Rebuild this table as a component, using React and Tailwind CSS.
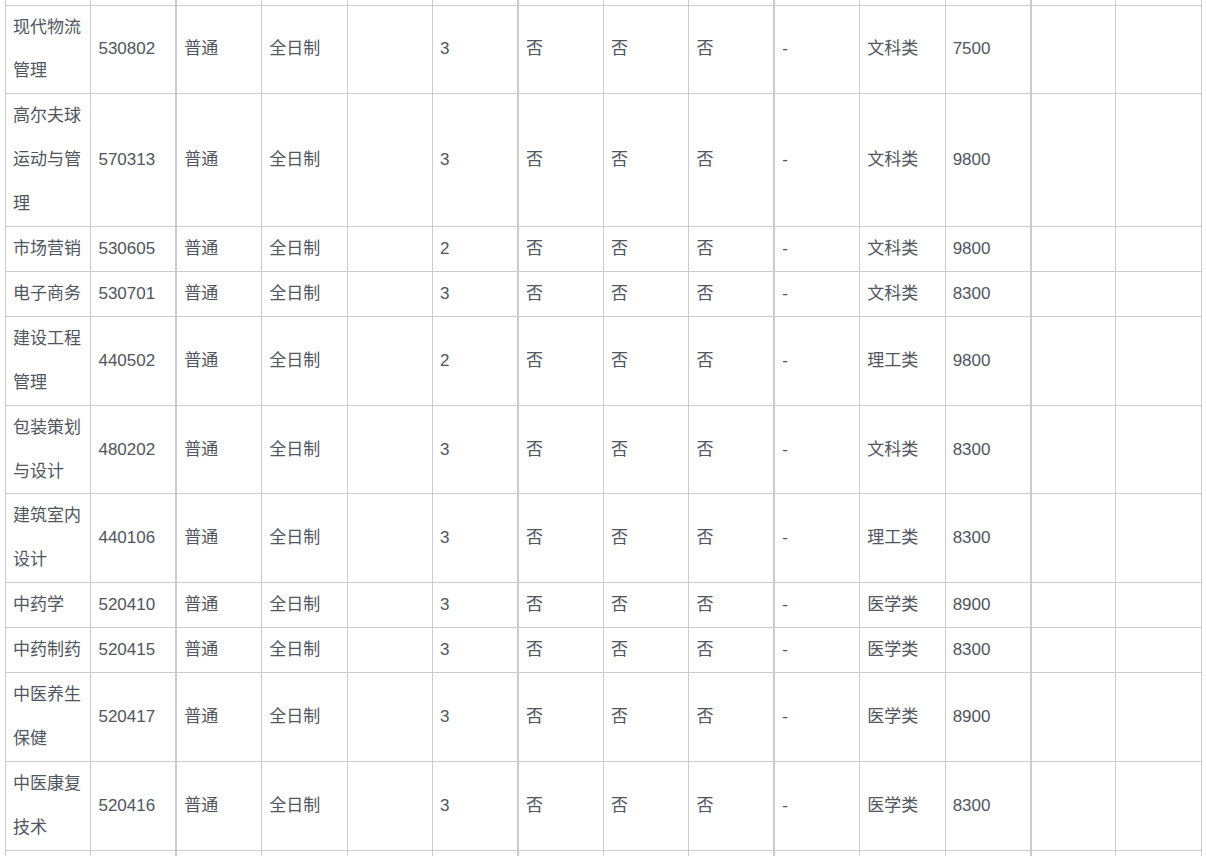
import React from 'react';

const rows = [
  ['现代物流管理', '530802', '3', '文科类', '7500'],
  ['高尔夫球运动与管理', '570313', '3', '文科类', '9800'],
  ['市场营销', '530605', '2', '文科类', '9800'],
  ['电子商务', '530701', '3', '文科类', '8300'],
  ['建设工程管理', '440502', '2', '理工类', '9800'],
  ['包装策划与设计', '480202', '3', '文科类', '8300'],
  ['建筑室内设计', '440106', '3', '理工类', '8300'],
  ['中药学', '520410', '3', '医学类', '8900'],
  ['中药制药', '520415', '3', '医学类', '8300'],
  ['中医养生保健', '520417', '3', '医学类', '8900'],
  ['中医康复技术', '520416', '3', '医学类', '8300'],
];

// columns whose left border renders a bit heavier in the screenshot
const heavy = [2, 6, 9, 12];

const Cell = ({ i, children }) => (
  <td
    className={
      'border border-[#cccccc] px-[7px] py-0 align-middle break-all ' +
      (heavy.includes(i) ? 'border-l-2' : '')
    }
  >
    {children}
  </td>
);

const App = () => {
  const cols = Array.from({ length: 14 });

  return (
    <div
      className="h-[856px] w-[1206px] overflow-hidden bg-white text-[#505560] text-[17px] leading-[43.9px]"
      style={{ fontFamily: '"Liberation Sans", "Noto Sans CJK SC", sans-serif' }}
    >
      <table className="ml-[5px] w-[1197px] table-fixed border-collapse">
        <colgroup>
          {cols.map((_, i) => (
            <col key={i} />
          ))}
        </colgroup>
        <tbody>
          {/* tail of the row above, cut off by the top edge */}
          <tr className="h-[5px] leading-[0px]">
            {cols.map((_, i) => (
              <td
                key={i}
                className={
                  'border-x border-b border-[#cccccc] p-0 ' +
                  (heavy.includes(i) ? 'border-l-2' : '')
                }
              />
            ))}
          </tr>
          {rows.map(([name, code, years, cat, fee]) => {
            const values = [name, code, '普通', '全日制', '', years, '否', '否', '否', '-', cat, fee, '', ''];
            return (
              <tr key={code}>
                {values.map((v, i) => (
                  <Cell key={i} i={i}>
                    {v}
                  </Cell>
                ))}
              </tr>
            );
          })}
          {/* next row, below the fold */}
          <tr className="h-[44px]">
            {cols.map((_, i) => (
              <Cell key={i} i={i} />
            ))}
          </tr>
        </tbody>
      </table>
    </div>
  );
};

export default App;
